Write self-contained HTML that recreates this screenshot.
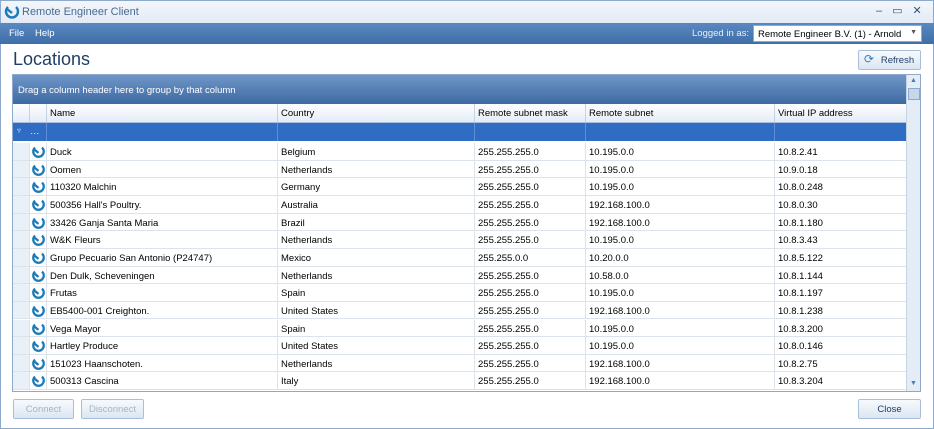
<!DOCTYPE html><html><head><style>
*{margin:0;padding:0;box-sizing:border-box}
body{width:934px;height:429px;overflow:hidden;font-family:"Liberation Sans",sans-serif;font-size:9.5px;background:#fff;position:relative;color:#000}
.abs{position:absolute}
#tb{left:0;top:0;width:934px;height:23px;background:linear-gradient(#f3f7fc,#e2eaf5);border:1px solid #8ea9cc;border-bottom:none}
#mb{left:0;top:23px;width:934px;height:21px;background:linear-gradient(#5a88c0,#3f6ea8);color:#fff}
#frame{left:0;top:44px;width:934px;height:385px;border:1px solid #8ea9cc;border-top:none}
#grid{left:12px;top:74px;width:909px;height:318px;border:1px solid #8ea9cc;background:#fff;overflow:hidden}
.grp{left:0;top:0;width:893px;height:29px;background:linear-gradient(#6f96c7,#3e6aa3);color:#fff;padding:10px 0 0 5px}
.hdr{left:0;top:29px;width:893px;height:19px;background:linear-gradient(#fff,#e3ecf7);border-bottom:1px solid #a9bfd9}
.flt{left:0;top:48px;width:893px;height:18px;background:#2f6cc4}
.c{position:absolute;top:0;height:100%;border-left:1px solid #c6d3e3;padding:4px 0 0 3px;white-space:nowrap}
.row{position:absolute;left:0;width:893px;height:17.65px;border-bottom:1px solid #dde3ea}
.row .c{padding-top:4px;border-left-color:#dde3ea}
.ind{left:0;width:16px;background:#eaf0f8;border-left:none!important}
.btn{position:absolute;height:20px;border:1px solid #a9bfd9;border-radius:2px;background:linear-gradient(#f7fafd,#dbe6f3);text-align:center;padding-top:4px}
</style></head><body>
<div id="tb" class="abs">
<svg class="abs" style="left:3px;top:3px" width="16" height="16" viewBox="0 0 16 16"><path d="M4 3 A6 6 0 1 0 12 3" fill="none" stroke="#1b7ab8" stroke-width="2.4"/><path d="M3 5 L8 9" stroke="#1b7ab8" stroke-width="2.4"/></svg>
<div class="abs" style="left:21px;top:5px;font-size:11px;color:#4a6a90">Remote Engineer Client</div>
<div class="abs" style="left:875px;top:3px;font-size:11px;color:#34507a;letter-spacing:10px">–▭✕</div>
</div>
<div id="mb" class="abs">
<span class="abs" style="left:9px;top:5px">File</span><span class="abs" style="left:35px;top:5px">Help</span>
<span class="abs" style="left:692px;top:5px;color:#e6eef8">Logged in as:</span>
<div class="abs" style="left:753px;top:2px;width:169px;height:17px;background:#fff;color:#000;padding:3px 0 0 4px;border:1px solid #8ea9cc">Remote Engineer B.V. (1) - Arnold<span class="abs" style="right:4px;top:3px;font-size:7px;color:#555">▼</span></div>
</div>
<div id="frame" class="abs"></div>
<div class="abs" style="left:13px;top:49px;font-size:18px;color:#1f3f66">Locations</div>
<div class="btn" style="left:858px;top:50px;width:63px;color:#1f3f66"><span style="color:#3c7ec3;font-size:12px;position:absolute;left:5px;top:1px">⟳</span><span style="margin-left:16px">Refresh</span></div>
<div id="grid" class="abs">
<div class="abs grp">Drag a column header here to group by that column</div>
<div class="abs hdr"><div class="c" style="left:0;width:16px;border:none"></div><div class="c" style="left:16px;width:17px"></div><div class="c" style="left:33px">Name</div><div class="c" style="left:264px">Country</div><div class="c" style="left:461px">Remote subnet mask</div><div class="c" style="left:572px">Remote subnet</div><div class="c" style="left:761px">Virtual IP address</div></div>
<div class="abs flt"><span class="abs" style="left:4px;top:3px;color:#cfe0f5;font-size:8px">▿</span><span class="abs" style="left:17px;top:3px;color:#fff">…</span><div class="c" style="left:33px;border-left-color:#5d8dd3"></div><div class="c" style="left:264px;border-left-color:#5d8dd3"></div><div class="c" style="left:461px;border-left-color:#5d8dd3"></div><div class="c" style="left:572px;border-left-color:#5d8dd3"></div><div class="c" style="left:761px;border-left-color:#5d8dd3"></div></div>
<div id="rows"></div>
<div class="abs" style="left:893px;top:0;width:15px;height:316px;background:#e4ecf6;border-left:1px solid #c6d3e3"><div class="abs" style="left:1px;top:13px;width:12px;height:12px;background:#c7d7ea;border:1px solid #8ea9cc"></div><div class="abs" style="left:3px;top:2px;font-size:7px;color:#4a78b8">▲</div><div class="abs" style="left:3px;top:305px;font-size:7px;color:#4a78b8">▼</div></div>
</div>
<div class="btn" style="left:13px;top:399px;width:61px;color:#a8b4c2">Connect</div>
<div class="btn" style="left:81px;top:399px;width:63px;color:#a8b4c2">Disconnect</div>
<div class="btn" style="left:858px;top:399px;width:63px;color:#1f3f66">Close</div>
<script>
var d=[["Duck","Belgium","255.255.255.0","10.195.0.0","10.8.2.41"],["Oomen","Netherlands","255.255.255.0","10.195.0.0","10.9.0.18"],["110320 Malchin","Germany","255.255.255.0","10.195.0.0","10.8.0.248"],["500356 Hall's Poultry.","Australia","255.255.255.0","192.168.100.0","10.8.0.30"],["33426 Ganja Santa Maria","Brazil","255.255.255.0","192.168.100.0","10.8.1.180"],["W&K Fleurs","Netherlands","255.255.255.0","10.195.0.0","10.8.3.43"],["Grupo Pecuario San Antonio (P24747)","Mexico","255.255.0.0","10.20.0.0","10.8.5.122"],["Den Dulk, Scheveningen","Netherlands","255.255.255.0","10.58.0.0","10.8.1.144"],["Frutas","Spain","255.255.255.0","10.195.0.0","10.8.1.197"],["EB5400-001 Creighton.","United States","255.255.255.0","192.168.100.0","10.8.1.238"],["Vega Mayor","Spain","255.255.255.0","10.195.0.0","10.8.3.200"],["Hartley Produce","United States","255.255.255.0","10.195.0.0","10.8.0.146"],["151023 Haanschoten.","Netherlands","255.255.255.0","192.168.100.0","10.8.2.75"],["500313 Cascina","Italy","255.255.255.0","192.168.100.0","10.8.3.204"]];
var h="",L=[33,264,461,572,761];
d.forEach(function(r,i){h+='<div class="row" style="top:'+(68+i*17.65)+'px"><div class="c ind"></div><div class="c" style="left:16px;padding:2px 0 0 1px"><svg width="15" height="14" viewBox="0 0 16 16"><path d="M4 3 A6 6 0 1 0 12 3" fill="none" stroke="#1b7ab8" stroke-width="2.6"/><path d="M3 5 L8 9" stroke="#1b7ab8" stroke-width="2.6"/></svg></div>';r.forEach(function(v,j){h+='<div class="c" style="left:'+L[j]+'px">'+v.replace(/&/g,"&amp;")+'</div>'});h+='</div>'});
document.getElementById("rows").innerHTML=h;
</script>
</body></html>
